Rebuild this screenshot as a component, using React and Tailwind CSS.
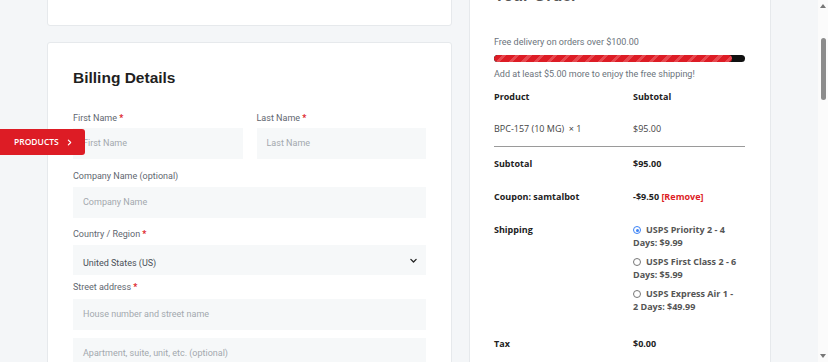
import React from 'react';

const roboto = { fontFamily: 'Roboto, "Liberation Sans", sans-serif' };

function Label({ children, required }) {
  return (
    <div className="text-[9px] leading-[14px] text-[#5f6770]" style={roboto}>
      {children}
      {required && <span className="text-[#dd1c25] font-bold"> *</span>}
    </div>
  );
}

function Field({ placeholder, className = '' }) {
  return (
    <div
      className={`h-[31px] bg-[#f6f8f9] flex items-center pl-[10px] text-[9px] text-[#a3a8ae] ${className}`}
      style={roboto}
    >
      {placeholder}
    </div>
  );
}

function Radio({ checked }) {
  return checked ? (
    <span className="inline-block w-[8px] h-[8px] rounded-full border border-[#3b82f6] bg-white p-[1.5px] mr-[5px] align-[-1px]">
      <span className="block w-full h-full rounded-full bg-[#3b82f6]" />
    </span>
  ) : (
    <span className="inline-block w-[8px] h-[8px] rounded-full border border-[#777] bg-white mr-[5px] align-[-1px]" />
  );
}

function Row({ left, right, className = '' }) {
  return (
    <div className={`flex text-[9px] leading-[14px] ${className}`}>
      <div className="w-[139px] shrink-0">{left}</div>
      <div className="flex-1 whitespace-nowrap">{right}</div>
    </div>
  );
}

export default function App() {
  return (
    <div className="relative h-[362px] w-[828px] overflow-hidden bg-[#f4f6f8] flex">
      <div className="w-[818px] shrink-0">
        <div className="flex gap-[17px] pl-[47px] -mt-[40px]">
          {/* left column */}
          <div className="w-[405px] flex flex-col gap-[16px]">
            <div className="h-[66px] bg-white border border-[#e6e9ec] rounded-[3px]" />
            <div className="bg-white border border-[#e6e9ec] rounded-[3px] px-[25px] pt-[25px] pb-[40px]">
              <h2
                className="text-[15.5px] leading-[20px] font-bold text-[#1f1f1f]"
                style={{ fontFamily: '"Liberation Sans", Arial, sans-serif' }}
              >
                Billing Details
              </h2>
              <div className="flex gap-[14px] mt-[23px]">
                <div className="flex-1">
                  <Label required>First Name</Label>
                  <Field placeholder="First Name" className="mt-[3px]" />
                </div>
                <div className="flex-1">
                  <Label required>Last Name</Label>
                  <Field placeholder="Last Name" className="mt-[3px]" />
                </div>
              </div>
              <div className="mt-[10px]">
                <Label>Company Name (optional)</Label>
                <Field placeholder="Company Name" className="mt-[4px]" />
              </div>
              <div className="mt-[9px]">
                <Label required>Country / Region</Label>
                <div
                  className="mt-[4px] h-[30px] bg-[#f6f8f9] flex items-end justify-between pl-[10px] pr-[8px] pb-[5px] text-[9px] text-[#4a5058]"
                  style={roboto}
                >
                  <span>United States (US)</span>
                  <svg width="9" height="9" viewBox="0 0 24 24" className="mb-[5px]" fill="none" stroke="#222" strokeWidth="3.5" strokeLinecap="round" strokeLinejoin="round">
                    <path d="M5 9l7 7 7-7" />
                  </svg>
                </div>
              </div>
              <div className="mt-[5px]">
                <Label required>Street address</Label>
                <Field placeholder="House number and street name" className="mt-[5px]" />
                <Field placeholder="Apartment, suite, unit, etc. (optional)" className="mt-[8px]" />
              </div>
            </div>
          </div>

          {/* right column */}
          <div className="w-[302px] self-start bg-white border border-[#e6e9ec] rounded-[3px] pl-[24px] pr-[25px] pt-[25px] pb-[30px]">
            <h3
              className="text-[16px] leading-[20px] font-bold text-[#555]"
              style={{ fontFamily: '"Liberation Sans", Arial, sans-serif' }}
            >
              Your Order
            </h3>
            <div className="mt-[29px] text-[9px] leading-[14px] text-[#6b737c]" style={roboto}>
              Free delivery on orders over $100.00
            </div>
            <div className="mt-[6px] h-[7px] rounded-full bg-[#111] overflow-hidden">
              <div className="h-full w-[95%] rounded-full bg-[repeating-linear-gradient(135deg,#dd1c25_0px,#dd1c25_6px,#e7484f_6px,#e7484f_9px)]" />
            </div>
            <div className="mt-[5px] text-[9px] leading-[14px] text-[#6b737c]" style={roboto}>
              Add at least $5.00 more to enjoy the free shipping!
            </div>

            <div className="text-[#222]" style={{ fontFamily: '"Open Sans", sans-serif' }}>
              <Row className="mt-[9px] font-bold" left="Product" right="Subtotal" />
              <Row
                className="mt-[18px] text-[#444]"
                left={<span>BPC-157 (10 MG)&nbsp; × 1</span>}
                right="$95.00"
              />
              <div className="mt-[10px] h-px bg-[#9a9a9a]" />
              <Row className="mt-[10px] font-bold" left="Subtotal" right="$95.00" />
              <Row
                className="mt-[19px] font-bold"
                left="Coupon: samtalbot"
                right={
                  <span>
                    -$9.50 <span className="text-[#dd1c25]">[Remove]</span>
                  </span>
                }
              />
              <div className="flex mt-[19px] text-[9px] leading-[13px]">
                <div className="w-[139px] shrink-0 font-bold">Shipping</div>
                <div className="flex-1 font-bold text-[#555] flex flex-col gap-[6px] whitespace-nowrap">
                  <div>
                    <div><Radio checked />USPS Priority 2 - 4</div>
                    <div>Days: $9.99</div>
                  </div>
                  <div>
                    <div><Radio />USPS First Class 2 - 6</div>
                    <div>Days: $5.99</div>
                  </div>
                  <div>
                    <div><Radio />USPS Express Air 1 -</div>
                    <div>2 Days: $49.99</div>
                  </div>
                </div>
              </div>
              <Row className="mt-[24px] font-bold" left="Tax" right="$0.00" />
              <div className="mt-[11px] h-px bg-[#9a9a9a]" />
            </div>
          </div>
        </div>
      </div>

      {/* scrollbar */}
      <div className="w-[10px] shrink-0 bg-[#fbfbfb] flex flex-col items-center">
        <svg width="6" height="4" viewBox="0 0 6 4" className="mt-[4px]"><path d="M3 0L6 4H0z" fill="#777" /></svg>
        <div className="mt-[30px] w-[5px] h-[62px] rounded-full bg-[#8c8c8c]" />
        <div className="flex-1" />
        <svg width="6" height="4" viewBox="0 0 6 4" className="mb-[4px]"><path d="M0 0H6L3 4z" fill="#777" /></svg>
      </div>

      {/* products side tab */}
      <div
        className="absolute left-0 top-[129px] w-[85px] h-[26px] bg-[#dd1c25] rounded-r-[3px] flex items-center pl-[14px] gap-[7px] text-white text-[8.5px] font-semibold"
        style={{ fontFamily: '"Open Sans", sans-serif' }}
      >
        PRODUCTS
        <svg width="7" height="9" viewBox="0 0 24 24" fill="none" stroke="white" strokeWidth="4" strokeLinecap="round" strokeLinejoin="round">
          <path d="M8 4l8 8-8 8" />
        </svg>
      </div>
    </div>
  );
}
